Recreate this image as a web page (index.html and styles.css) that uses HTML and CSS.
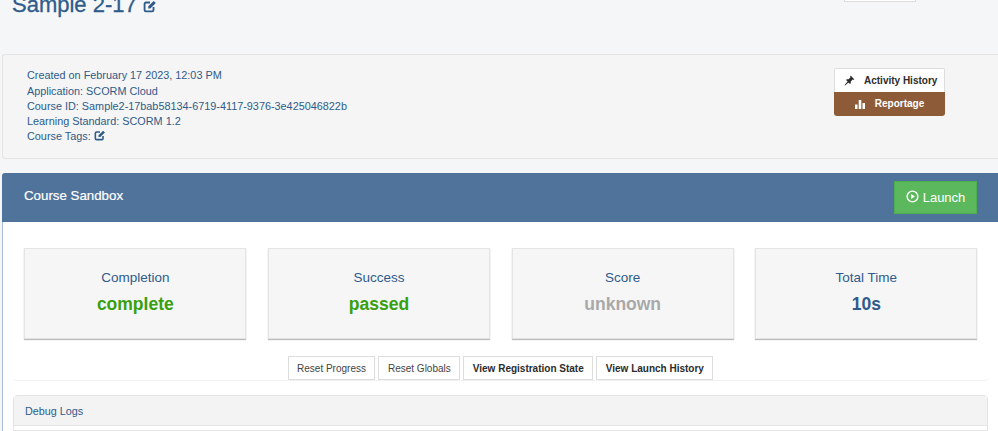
FILE: index.html
```html
<!DOCTYPE html>
<html lang="en">
<head>
<meta charset="utf-8">
<title>Sample 2-17</title>
<link rel="stylesheet" href="styles.css">
</head>
<body>
<svg class="defs" width="0" height="0" aria-hidden="true">
  <symbol id="edit" viewBox="0 0 16 16">
    <path d="M12 9.200V12.600a1.600 1.600 0 0 1-1.600 1.600H3.400a1.600 1.600 0 0 1-1.600-1.600V5.600A1.600 1.600 0 0 1 3.400 4H8" fill="none" stroke="currentColor" stroke-width="2.100"/>
    <path d="M6 8.400 12.200 2.200l2.400 2.400-6.200 6.200H6z" fill="currentColor"/>
  </symbol>
</svg>
<header class="top">
  <h1 class="title">Sample 2-17 <svg class="edit-lg"><use href="#edit"/></svg></h1>
  <div class="top-btn"></div>
</header>
<section class="info">
  <div class="meta">
    <div>Created on February 17 2023, 12:03 PM</div>
    <div>Application: SCORM Cloud</div>
    <div>Course ID: Sample2-17bab58134-6719-4117-9376-3e425046822b</div>
    <div>Learning Standard: SCORM 1.2</div>
    <div>Course Tags: <svg class="edit-sm"><use href="#edit"/></svg></div>
  </div>
  <div class="actions">
    <div class="act act-history">
      <svg class="pin" viewBox="0 0 12 12"><path d="M7.200.6 11.400 4.800 10.500 5.300 9.500 4.900 7.400 7 7.300 9 6.500 9.700 2.300 5.500 3 4.700 5 4.600 7.100 2.500 6.700 1.500zM4 7.100 5 8.100 1 11.400.6 11z" fill="currentColor"/></svg>
      <span>Activity History</span>
    </div>
    <div class="act act-report">
      <svg class="bars" viewBox="0 0 10 10"><path d="M0 5.500h2.500V10H0zM3.700 1h2.600v9H3.700zM7.500 4H10v6H7.500z" fill="currentColor"/></svg>
      <span>Reportage</span>
    </div>
  </div>
</section>
<section class="sandbox">
  <div class="sb-head">
    <h2 class="sb-title">Course Sandbox</h2>
    <button class="launch" type="button">
      <svg class="play" viewBox="0 0 14 14"><circle cx="7" cy="7" r="5.800" fill="none" stroke="currentColor" stroke-width="1.500"/><path d="M5.500 4.300 9.700 7 5.500 9.700z" fill="currentColor"/></svg>
      Launch
    </button>
  </div>
  <div class="sb-body">
    <div class="cards">
      <div class="card"><div class="label">Completion</div><div class="value green">complete</div></div>
      <div class="card"><div class="label">Success</div><div class="value green">passed</div></div>
      <div class="card"><div class="label">Score</div><div class="value grey">unknown</div></div>
      <div class="card"><div class="label">Total Time</div><div class="value blue">10s</div></div>
    </div>
    <div class="btn-well">
      <button class="btn" type="button">Reset Progress</button>
      <button class="btn" type="button">Reset Globals</button>
      <button class="btn strong" type="button">View Registration State</button>
      <button class="btn strong" type="button">View Launch History</button>
    </div>
    <div class="logs">
      <div class="logs-head">Debug Logs</div>
    </div>
  </div>
</section>
</body>
</html>
```
FILE: styles.css
```css
* { box-sizing: border-box; }
html, body { margin: 0; height: 431px; overflow: hidden; }
body {
  background: #f5f6f8;
  color: #2f5b8a;
  font-family: "Liberation Sans", Arial, sans-serif;
  font-size: 12px;
}
.defs { position: absolute; }
.top {
  height: 54px;
  display: flex;
  justify-content: space-between;
  align-items: flex-start;
  padding: 0 82px 0 12px;
}
.title {
  margin: -9px 0 0;
  font-size: 22px;
  line-height: 28px;
  font-weight: 400;
  color: #2f5b8a;
  -webkit-text-stroke: 0.3px #2f5b8a;
}
.edit-lg { width: 14px; height: 14px; vertical-align: -0.5px; color: #2f5b8a; }
.edit-sm { width: 12px; height: 12px; vertical-align: -1px; color: #2f5b8a; }
.top-btn {
  width: 72px;
  height: 2px;
  background: #fff;
  border: 1px solid #ddd;
  border-top: 0;
}
.info {
  height: 105px;
  margin-left: 2px;
  padding: 13px 53px 0 24px;
  background: #f5f5f5;
  border: 1px solid #e4e4e4;
  border-right: 0;
  border-radius: 3px 0 0 3px;
  display: flex;
  justify-content: space-between;
  align-items: flex-start;
  line-height: 15.300px;
  font-size: 10.850px;
}
.meta { padding-top: 0.300px; }
.actions { width: 111px; font-size: 10px; font-weight: 700; white-space: nowrap; }
.act {
  height: 24px;
  display: flex;
  align-items: center;
}
.act-history {
  background: #fff;
  border: 1px solid #ddd;
  border-bottom: 0;
  border-radius: 2px 2px 0 0;
  color: #2b2b2b;
  padding-left: 9px;
  gap: 9px;
}
.act-report {
  background: #8d5b37;
  color: #fff;
  border-radius: 0 0 3px 3px;
  justify-content: center;
  gap: 10px;
}
.pin { width: 11px; height: 11px; }
.bars { width: 10px; height: 10px; }
.sandbox { margin: 14px 0 0 2px; }
.sb-head {
  height: 49px;
  background: #4f739b;
  border-radius: 3px 0 0 0;
  padding: 8px 21px 8px 22px;
  display: flex;
  justify-content: space-between;
  align-items: center;
}
.sb-title {
  margin: 0 0 4px;
  color: #fff;
  font-size: 13.300px;
  font-weight: 400;
  -webkit-text-stroke: 0.2px #fff;
}
.launch {
  width: 83px;
  height: 33px;
  padding: 0;
  background: #5cb85c;
  border: 1px solid #4cae4c;
  color: #fff;
  font: 13px "Liberation Sans", Arial, sans-serif;
  display: flex;
  align-items: center;
  justify-content: center;
  gap: 4px;
}
.play { width: 13px; height: 13px; margin-top: -2px; }
.sb-body {
  height: 209px;
  background: #fff;
  border-left: 1px solid #a9bdd3;
  padding: 26px 10px 0 10px;
}
.cards {
  display: grid;
  grid-template-columns: repeat(4, 222px);
  column-gap: 21.700px;
  padding-left: 11.300px;
}
.card {
  height: 91px;
  background: #f6f6f6;
  border: 1px solid #e4e4e4;
  box-shadow: 0 1px 1px #bbb;
  text-align: center;
  padding-top: 21px;
}
.label { font-size: 13.500px; line-height: 16px; }
.value {
  margin-top: 6px;
  font-size: 17.500px;
  line-height: 24px;
  font-weight: 700;
}
.green { color: #38a00f; }
.grey { color: #a9a9a9; }
.blue { color: #2f5b8a; }
.btn-well {
  height: 25px;
  margin-top: 17px;
  border-bottom: 1px solid #f1f1f1;
  border-radius: 0 0 4px 4px;
  display: flex;
  justify-content: center;
  gap: 3px;
}
.btn {
  height: 24px;
  padding: 0 8.500px;
  background: #fff;
  border: 1px solid #ddd;
  color: #444;
  font: 10px "Liberation Sans", Arial, sans-serif;
}
.strong { font-weight: 700; color: #2b2b2b; }
.logs {
  margin-top: 14px;
  height: 36px;
  background: #fff;
  border: 1px solid #e4e4e4;
  border-radius: 4px 4px 0 0;
}
.logs-head {
  height: 30px;
  line-height: 30px;
  padding-left: 11px;
  background: #f3f3f3;
  border-bottom: 1px solid #e4e4e4;
  font-size: 10.800px;
}
```
